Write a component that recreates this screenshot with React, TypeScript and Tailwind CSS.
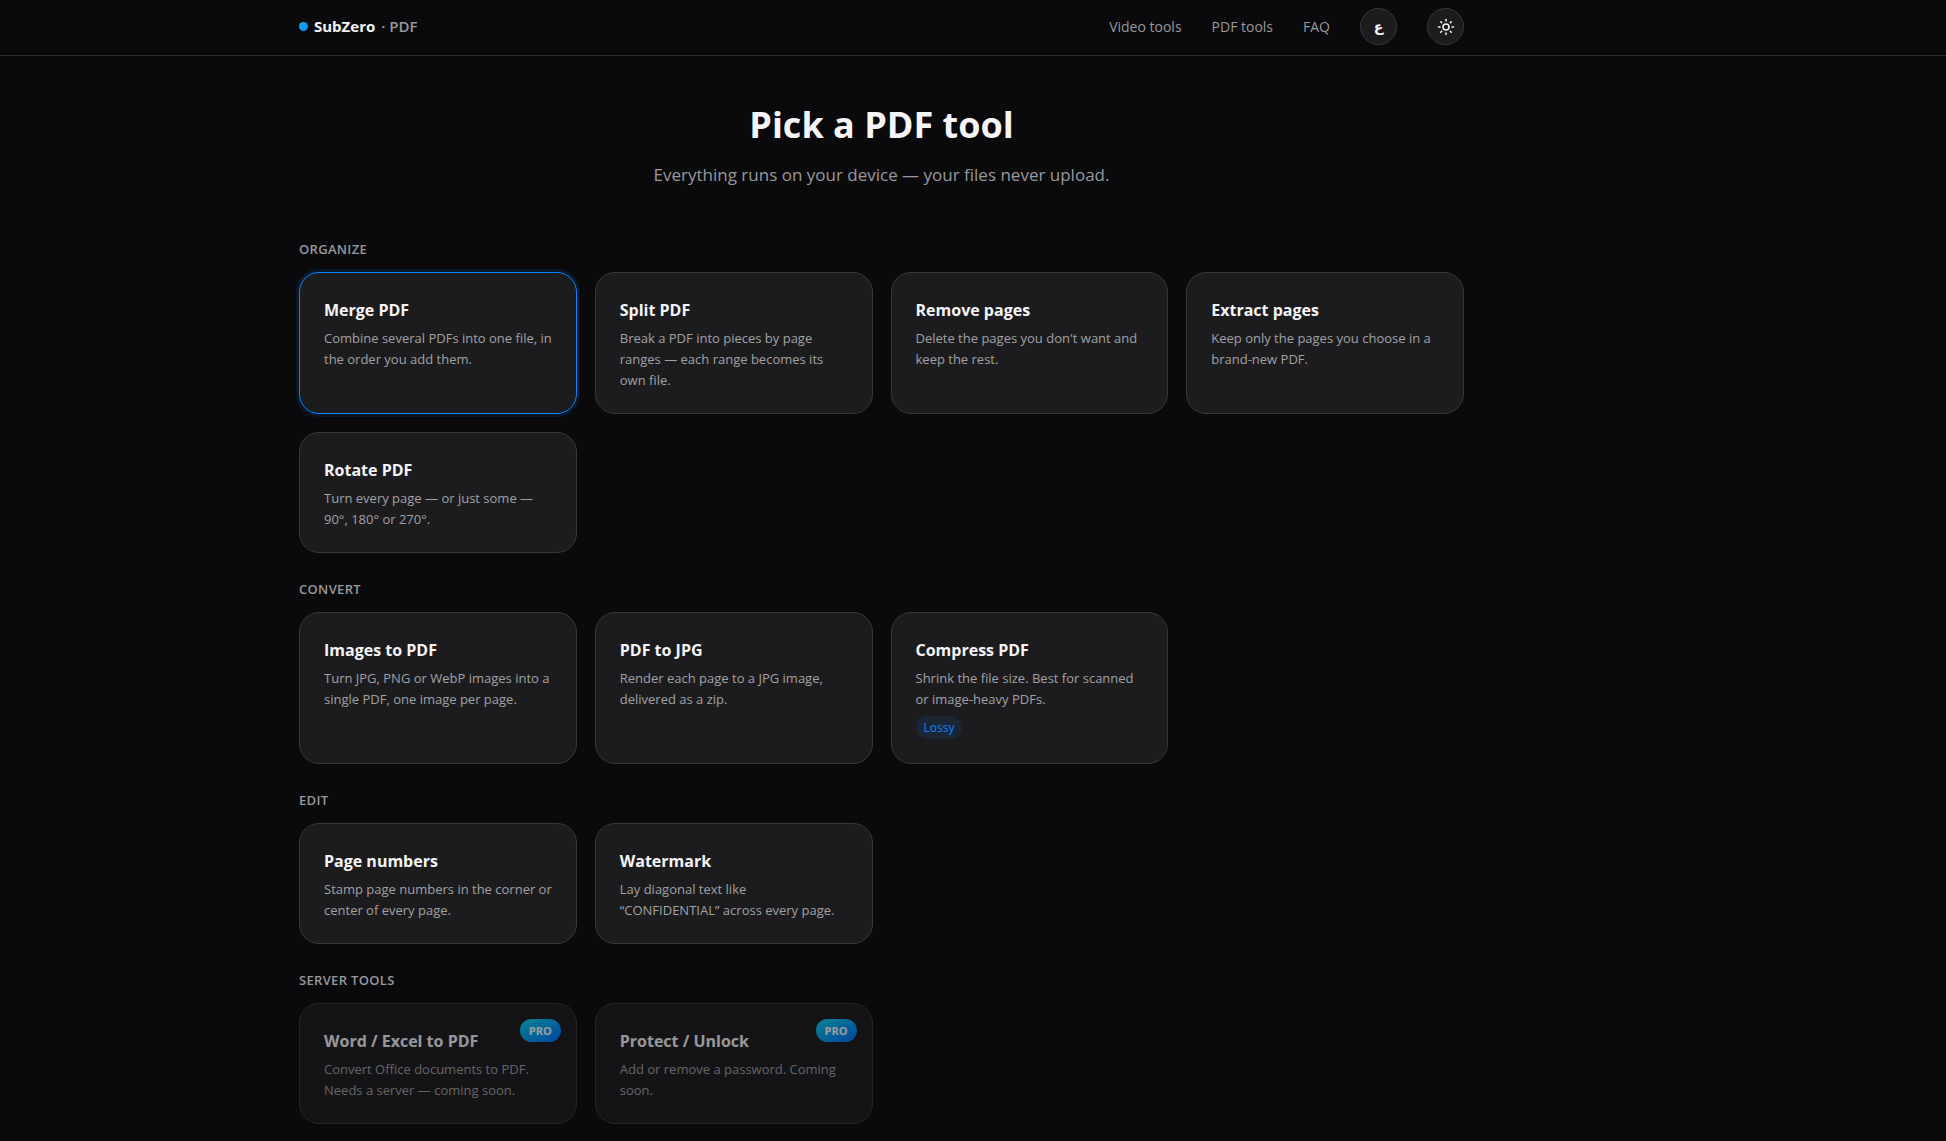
import { Sun } from "lucide-react";

interface Tool {
  name: string;
  description: string;
  href: string;
  badge?: string;
  pro?: boolean;
  selected?: boolean;
}

interface ToolGroup {
  title: string;
  tools: Tool[];
}

const navLinks = [
  { label: "Video tools", href: "#video" },
  { label: "PDF tools", href: "#pdf" },
  { label: "FAQ", href: "#faq" },
];

const groups: ToolGroup[] = [
  {
    title: "Organize",
    tools: [
      {
        name: "Merge PDF",
        description: "Combine several PDFs into one file, in the order you add them.",
        href: "#merge",
        selected: true,
      },
      {
        name: "Split PDF",
        description: "Break a PDF into pieces by page ranges — each range becomes its own file.",
        href: "#split",
      },
      {
        name: "Remove pages",
        description: "Delete the pages you don't want and keep the rest.",
        href: "#remove",
      },
      {
        name: "Extract pages",
        description: "Keep only the pages you choose in a brand-new PDF.",
        href: "#extract",
      },
      {
        name: "Rotate PDF",
        description: "Turn every page — or just some — 90°, 180° or 270°.",
        href: "#rotate",
      },
    ],
  },
  {
    title: "Convert",
    tools: [
      {
        name: "Images to PDF",
        description: "Turn JPG, PNG or WebP images into a single PDF, one image per page.",
        href: "#images",
      },
      {
        name: "PDF to JPG",
        description: "Render each page to a JPG image, delivered as a zip.",
        href: "#jpg",
      },
      {
        name: "Compress PDF",
        description: "Shrink the file size. Best for scanned or image-heavy PDFs.",
        href: "#compress",
        badge: "Lossy",
      },
    ],
  },
  {
    title: "Edit",
    tools: [
      {
        name: "Page numbers",
        description: "Stamp page numbers in the corner or center of every page.",
        href: "#numbers",
      },
      {
        name: "Watermark",
        description: "Lay diagonal text like “CONFIDENTIAL” across every page.",
        href: "#watermark",
      },
    ],
  },
  {
    title: "Server tools",
    tools: [
      {
        name: "Word / Excel to PDF",
        description: "Convert Office documents to PDF. Needs a server — coming soon.",
        href: "#office",
        pro: true,
      },
      {
        name: "Protect / Unlock",
        description: "Add or remove a password. Coming soon.",
        href: "#protect",
        pro: true,
      },
    ],
  },
];

function Header() {
  return (
    <header className="border-b border-[#2c2c2e] xl:pr-[183px]">
      <div className="mx-auto flex max-w-[1213px] items-center justify-between px-6 pt-2 pb-[10px]">
        <a href="#home" className="flex items-center gap-[6px] text-[15px] font-bold text-[#f5f5f7]">
          <span className="size-[9px] rounded-full bg-linear-to-br from-[#1cb5e6] to-[#0a84ff]" />
          SubZero
          <span className="font-semibold text-[#98989d]">· PDF</span>
        </a>
        <nav className="flex items-center gap-[30px] text-sm text-[#98989d]">
          {navLinks.map((link) => (
            <a key={link.label} href={link.href} className="hover:text-white">
              {link.label}
            </a>
          ))}
          <button
            type="button"
            aria-label="Switch language"
            className="flex size-[37px] items-center justify-center rounded-full border border-[#38383a] bg-[#1c1c1e] font-bold text-[#f5f5f7]"
          >
            ع
          </button>
          <button
            type="button"
            aria-label="Toggle theme"
            className="flex size-[37px] items-center justify-center rounded-full border border-[#38383a] bg-[#1c1c1e] text-[#f5f5f7]"
          >
            <Sun size={18} />
          </button>
        </nav>
      </div>
    </header>
  );
}

function ToolCard({ tool }: { tool: Tool }) {
  const border = tool.selected
    ? "border-[#0a84ff] shadow-[0_0_0_3px_rgba(10,132,255,0.12)]"
    : "border-[#38383a]";

  return (
    <a
      href={tool.href}
      aria-disabled={tool.pro}
      className={`relative block rounded-[20px] border bg-[#1c1c1e] pt-[25px] pr-[23px] pb-[22px] pl-6 ${border} ${tool.pro ? "opacity-60" : ""}`}
    >
      {tool.pro && (
        <span className="absolute top-[15px] right-[15px] rounded-full bg-linear-to-br from-[#22d3ee] to-[#0a6cff] px-[9px] text-[11px] leading-[23px] font-bold text-white">
          PRO
        </span>
      )}
      <h3 className="text-base leading-[25px] font-bold text-[#f5f5f7]">{tool.name}</h3>
      <p className="mt-[5px] text-[13px] leading-[21px] text-[#a1a1a6]">{tool.description}</p>
      {tool.badge && (
        <span className="mt-[6px] mb-[2px] inline-block rounded-full bg-[#0a84ff]/10 px-2 text-xs leading-[23px] text-[#0a84ff]">
          {tool.badge}
        </span>
      )}
    </a>
  );
}

export default function App() {
  return (
    <div className="min-h-screen bg-[#0a0a0c] font-['Open_Sans','DejaVu_Sans',sans-serif]">
      <Header />
      <main className="xl:pr-[183px]">
        <div className="mx-auto max-w-[1213px] px-6 pb-4">
          <div className="pt-11 text-center">
            <h1 className="text-4xl leading-[50px] font-bold text-[#f5f5f7]">Pick a PDF tool</h1>
            <p className="mt-[11px] text-[17px] leading-7 text-[#98989d]">
              Everything runs on your device — your files never upload.
            </p>
          </div>
          <div className="pt-6">
            {groups.map((group) => (
              <section key={group.title}>
                <h2 className="pt-[26px] pb-[13px] text-[13px] leading-5 font-semibold tracking-wide text-[#98989d] uppercase">
                  {group.title}
                </h2>
                <div className="grid gap-[18px] sm:grid-cols-2 lg:grid-cols-4">
                  {group.tools.map((tool) => (
                    <ToolCard key={tool.name} tool={tool} />
                  ))}
                </div>
              </section>
            ))}
          </div>
        </div>
      </main>
    </div>
  );
}
